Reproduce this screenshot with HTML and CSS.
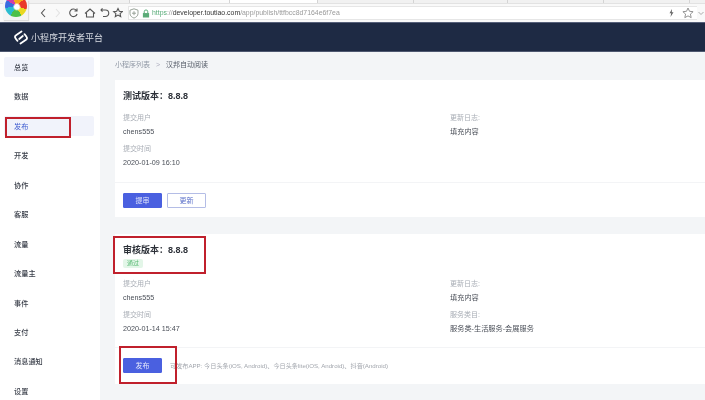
FILE: index.html
```html
<!DOCTYPE html>
<html lang="zh">
<head>
<meta charset="utf-8">
<title>小程序开发者平台</title>
<link rel="stylesheet" href="styles.css">
</head>
<body>
<div class="page">
  <div class="browser">
    <div class="tabs">
      <span class="tab tab-a"></span><span class="tab tab-b"></span><span class="tab tab-c"></span><span class="tab tab-d"></span><span class="tab tab-e"></span><span class="tab tab-f"></span><span class="tab tab-g"></span>
    </div>
    <div class="toolbar">
      <span class="appbox"><span class="pinwheel"></span></span>
      <svg class="tools" width="84" height="14" viewBox="0 0 84 14" fill="none" stroke="#555" stroke-width="1.100">
        <path d="M6 3 2.500 7 6 11"/>
        <path d="M17 3 20.500 7 17 11" stroke="#e2e2e2"/>
        <path d="M37.500 4.500a3.800 3.800 0 1 0 .6 3.500M38 2.500v2.500h-2.500"/>
        <path d="M46 7.500 51 3l5 4.500M47.500 7v4h7V7"/>
        <path d="M62 4h4.500a3.200 3.200 0 0 1 0 6.500H64M63.500 2.300 62 4l1.500 1.700"/>
        <path d="M79 2.500l1.300 2.800 3 .3-2.200 2 .6 3-2.700-1.500-2.700 1.500.6-3-2.200-2 3-.3z"/>
      </svg>
      <div class="address">
        <svg class="shield" width="10" height="11" viewBox="0 0 10 11" fill="none" stroke="#8f9a8f" stroke-width=".9"><path d="M5 .8 9 2.200v3.300c0 2.400-1.800 3.700-4 4.600C2.800 9.200 1 7.900 1 5.500V2.200zM5 3.200v4M3 5.200h4"/></svg>
        <svg class="lock" width="8" height="9" viewBox="0 0 9 10"><path d="M2.500 4.500V3a2 2 0 0 1 4 0v1.500" fill="none" stroke="#5aab77" stroke-width="1.100"/><rect x="1" y="4.500" width="7" height="5" fill="#5aab77"/></svg>
        <span class="url"><span class="scheme">https</span>://<span class="host">developer.toutiao.com</span>/app/publish/ttfbcc8d7164e6f7ea</span>
        <svg class="bolt" width="5" height="8" viewBox="0 0 5 8" fill="#666"><path d="M3 0 .5 4.200h1.700L1.500 8 4.500 3.200H2.800z"/></svg>
        <svg class="fav" width="12" height="12" viewBox="0 0 12 12" fill="none" stroke="#888" stroke-width=".9"><path d="M6 1l1.500 3.300 3.600.4-2.700 2.400.8 3.500L6 8.900l-3.200 1.700.8-3.500L.9 4.700l3.600-.4z"/></svg>
      </div>
      <svg class="chev" width="6" height="5" viewBox="0 0 6 5" fill="none" stroke="#aaa"><path d="M.5 1 3 3.500 5.500 1"/></svg>
    </div>
  </div>

  <header class="topbar">
    <svg class="logo" width="14" height="15" viewBox="0 0 14 15" fill="none" stroke="#fff" stroke-width="1.800" stroke-linecap="round" stroke-linejoin="round">
      <path d="M7.500 1.500 2 5.200a2 2 0 0 0-.7 2.600c.4.900 1.200 2 2.200 3"/>
      <path d="M6.500 13.500 12 9.800a2 2 0 0 0 .7-2.600c-.4-.9-1.200-2-2.200-3"/>
      <path d="M8.800 6 5.200 9"/>
    </svg>
    <span class="brand">小程序开发者平台</span>
  </header>

  <div class="main">
    <nav class="sidebar">
      <a class="item tinted">总览</a>
      <a class="item">数据</a>
      <a class="item tinted active">发布</a>
      <a class="item">开发</a>
      <a class="item">协作</a>
      <a class="item">客服</a>
      <a class="item">流量</a>
      <a class="item">流量主</a>
      <a class="item">事件</a>
      <a class="item">支付</a>
      <a class="item">消息通知</a>
      <a class="item">设置</a>
    </nav>

    <main class="content">
      <div class="crumbs"><span>小程序列表</span><span class="sep">&gt;</span><span class="current">汉邦自动阅读</span></div>

      <section class="card card-test">
        <div class="card-head">
          <h2 class="title">测试版本：8.8.8</h2>
        </div>
        <div class="details">
          <div class="col">
            <div class="label">提交用户</div>
            <div class="value">chens555</div>
            <div class="label gap">提交时间</div>
            <div class="value">2020-01-09 16:10</div>
          </div>
          <div class="col">
            <div class="label">更新日志:</div>
            <div class="value">填充内容</div>
          </div>
        </div>
        <div class="actions">
          <button class="btn primary">提审</button>
          <button class="btn outline">更新</button>
        </div>
      </section>

      <section class="card card-review">
        <div class="card-head">
          <h2 class="title">审核版本：8.8.8</h2>
          <span class="tag">通过</span>
        </div>
        <div class="details">
          <div class="col">
            <div class="label">提交用户</div>
            <div class="value">chens555</div>
            <div class="label gap">提交时间</div>
            <div class="value">2020-01-14 15:47</div>
          </div>
          <div class="col">
            <div class="label">更新日志:</div>
            <div class="value">填充内容</div>
            <div class="label gap">服务类目:</div>
            <div class="value">服务类-生活服务-会展服务</div>
          </div>
        </div>
        <div class="actions">
          <button class="btn primary">发布</button>
          <span class="note">可发布APP: 今日头条(iOS, Android)、今日头条lite(iOS, Android)、抖音(Android)</span>
        </div>
      </section>
    </main>
  </div>

  <span class="mark mark-nav"></span>
  <span class="mark mark-title"></span>
  <span class="mark mark-btn"></span>
</div>
</body>
</html>
```

FILE: styles.css
```css
* { box-sizing: border-box; }
html, body { margin: 0; padding: 0; }
body { width: 705px; height: 400px; overflow: hidden; background: #fff; font-family: "Liberation Sans", "Noto Sans CJK SC", sans-serif; }
.page { position: relative; width: 705px; height: 400px; overflow: hidden; filter: blur(.35px); }

.browser { height: 22px; background: #f9f9f9; }
.tabs { height: 4px; display: flex; background: #f1f1f1; border-bottom: 1px solid #e2e2e2; }
.tab { height: 3px; border-right: 1px solid #d4d4d4; }
.tab-a { width: 130px; }
.tab-b { width: 100px; background: #fbfbfb; }
.tab-c { width: 88px; background: #fff; }
.tab-d { width: 96px; }
.tab-e { width: 94px; }
.tab-f { width: 96px; }
.tab-g { width: 86px; }
.toolbar { position: relative; height: 18px; display: flex; align-items: center; padding-left: 39px; }
.appbox { position: absolute; left: 3px; top: -4px; width: 25px; height: 20px; overflow: hidden; background: #f4f4f4; box-shadow: 1px 1px 1px #ddd; }
.pinwheel { display: block; width: 22px; height: 22px; margin: -5px 0 0 2px; border-radius: 50%; background: radial-gradient(circle at 54% 54%, #fff 0 14%, transparent 24%), conic-gradient(#f7a81c 0 14%, #ea3a2a 14% 30%, #e9d820 30% 42%, #4cc04a 42% 58%, #2bbcd0 58% 72%, #3a6ce0 72% 84%, #d23fa8 84% 94%, #f7a81c 94% 100%); }
.tools { flex: none; }
.address { flex: none; width: 569px; height: 14px; margin-left: 5px; display: flex; align-items: center; padding-left: 0; background: #fff; border: 1px solid #e6e6e6; border-width: 1px 0 1px 1px; line-height: 12px; color: #9a9a9a; }
.shield { flex: none; }
.lock { flex: none; margin-left: 3px; }
.url { margin-left: 2px; white-space: nowrap; font-size: 6.900px; }
.scheme { color: #58ab78; }
.host { color: #333; }
.bolt { flex: none; margin-left: auto; margin-right: 8px; }
.fav { flex: none; margin-right: 3px; }
.chev { flex: none; margin-left: 1px; }

.topbar { height: 30px; display: flex; align-items: center; padding-left: 14px; background: #1e2a44; border-top: 1px solid #56607a; border-bottom: 1px solid #4e5870; }
.logo { flex: none; }
.brand { margin-left: 3px; font-size: 9px; color: #d9dce3; white-space: nowrap; }

.main { display: flex; height: 348px; }
.sidebar { flex: none; width: 100px; padding: 5px 6px 0 4px; background: #fff; display: flex; flex-direction: column; }
.item { flex: none; height: 20px; margin-bottom: 9.450px; padding-left: 10px; font-size: 7.200px; line-height: 21px; color: #3a3f4a; font-weight: 500; border-radius: 2px; }
.tinted { background: #f1f3fb; }
.active { color: #3d5bd0; font-weight: 400; }

.content { flex: 1; min-width: 0; padding: 0 0 0 15px; background: #f3f5f7; }
.crumbs { height: 28px; display: flex; align-items: center; padding-bottom: 4px; font-size: 7px; color: #9098a5; }
.sep { margin: 0 6px; color: #aab; }
.current { color: #555c68; }

.card { background: #fff; }
.card-test { height: 137px; margin-bottom: 17px; }
.card-review { height: 150px; }
.card-head { padding: 9px 8px 0; }
.title { margin: 0; font-size: 9px; line-height: 14px; font-weight: 700; color: #2c3038; white-space: nowrap; }
.tag { display: block; width: 20px; height: 9px; margin-top: 2px; background: #e3f6e8; border-radius: 2px; font-size: 6px; line-height: 9px; text-align: center; color: #54b870; }
.details { display: grid; grid-template-columns: 327px 1fr; padding: 10px 8px 0; }
.card-test .details { height: 79px; }
.card-review .details { height: 79px; padding-top: 11px; }
.label { font-size: 7px; line-height: 10px; color: #a8adb5; }
.value { margin-top: 4px; font-size: 7.200px; line-height: 10px; color: #4a4f58; white-space: nowrap; }
.gap { margin-top: 7px; }
.actions { display: flex; align-items: center; gap: 5px; height: 35px; padding-left: 8px; border-top: 1px solid #f3f4f6; }
.btn { flex: none; width: 39px; height: 15px; padding: 0; border-radius: 1px; font-family: inherit; font-size: 7px; line-height: 13px; }
.primary { background: #4a60e0; border: 1px solid #4a60e0; color: #e4e8fb; }
.outline { background: #fff; border: 1px solid #b4bde6; color: #5a6fc9; }
.note { margin-left: 3px; font-size: 6.150px; color: #a2a6ad; white-space: nowrap; }

.mark { position: absolute; border: 2px solid #c0202c; }
.mark-nav { left: 5px; top: 117px; width: 66px; height: 21px; }
.mark-title { left: 113px; top: 236px; width: 93px; height: 38px; }
.mark-btn { left: 119px; top: 346px; width: 58px; height: 38px; }
```
